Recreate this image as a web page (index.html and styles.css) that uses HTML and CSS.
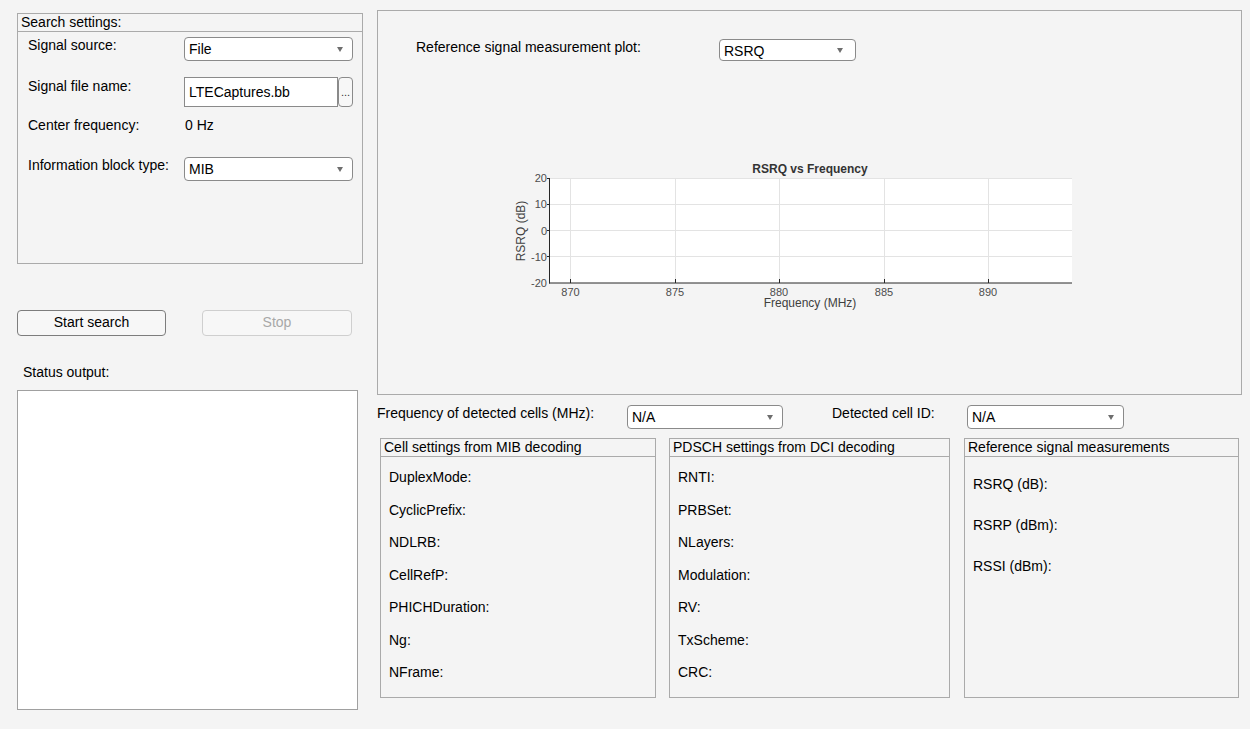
FILE: index.html
```html
<!DOCTYPE html>
<html lang="en">
<head>
    <meta charset="UTF-8">
    <title>LTE Cell Search</title>
    <link rel="stylesheet" href="styles.css">
</head>
<body>
    <div class="app">

        <!-- left column: search settings and status -->
        <div class="left-col">
            <div class="panel search-panel">
                <div class="panel-title">Search settings:</div>
                <div class="search-body">
                    <div class="field-row">
                        <div class="field-label">Signal source:</div>
                        <div class="dropdown w169"><span>File</span><i class="arrow"></i></div>
                    </div>
                    <div class="field-row row-file">
                        <div class="field-label pad1">Signal file name:</div>
                        <div class="file-input">LTECaptures.bb</div>
                        <div class="browse-btn">...</div>
                    </div>
                    <div class="field-row row-freq">
                        <div class="field-label">Center frequency:</div>
                        <div class="field-value">0 Hz</div>
                    </div>
                    <div class="field-row row-block">
                        <div class="field-label">Information block type:</div>
                        <div class="dropdown w169"><span>MIB</span><i class="arrow"></i></div>
                    </div>
                </div>
            </div>

            <div class="button-row">
                <div class="btn">Start search</div>
                <div class="btn btn-disabled">Stop</div>
            </div>

            <div class="status-label">Status output:</div>
            <div class="status-box"></div>
        </div>

        <!-- right column: plot and decoded info -->
        <div class="right-col">
            <div class="panel plot-panel">
                <div class="plot-header">
                    <div class="plot-label">Reference signal measurement plot:</div>
                    <div class="dropdown w137 arrow-far"><span>RSRQ</span><i class="arrow"></i></div>
                </div>
                <svg class="plot" width="863" height="333" viewBox="0 0 863 333">
                    <rect x="171" y="117" width="523" height="105" fill="#ffffff"/>
                    <g stroke="#e3e3e3" stroke-width="1">
                        <line x1="192.5" y1="117" x2="192.5" y2="222"/>
                        <line x1="297.5" y1="117" x2="297.5" y2="222"/>
                        <line x1="401.5" y1="117" x2="401.5" y2="222"/>
                        <line x1="506.5" y1="117" x2="506.5" y2="222"/>
                        <line x1="610.5" y1="117" x2="610.5" y2="222"/>
                        <line x1="171" y1="117.5" x2="694" y2="117.5"/>
                        <line x1="171" y1="143.5" x2="694" y2="143.5"/>
                        <line x1="171" y1="169.5" x2="694" y2="169.5"/>
                        <line x1="171" y1="195.5" x2="694" y2="195.5"/>
                    </g>
                    <g stroke="#262626" stroke-width="1">
                        <line x1="171.5" y1="117" x2="171.5" y2="222.5"/>
                        <line x1="171" y1="222" x2="694" y2="222"/>
                        <line x1="192.5" y1="222" x2="192.5" y2="218"/>
                        <line x1="297.5" y1="222" x2="297.5" y2="218"/>
                        <line x1="401.5" y1="222" x2="401.5" y2="218"/>
                        <line x1="506.5" y1="222" x2="506.5" y2="218"/>
                        <line x1="610.5" y1="222" x2="610.5" y2="218"/>
                        <line x1="169" y1="117.5" x2="171" y2="117.5"/>
                        <line x1="169" y1="143.5" x2="171" y2="143.5"/>
                        <line x1="169" y1="169.5" x2="171" y2="169.5"/>
                        <line x1="169" y1="195.5" x2="171" y2="195.5"/>
                    </g>
                    <text class="plot-title" x="432" y="112" text-anchor="middle">RSRQ vs Frequency</text>
                    <g class="tick-text" text-anchor="end">
                        <text x="169" y="121">20</text>
                        <text x="169" y="147">10</text>
                        <text x="169" y="174">0</text>
                        <text x="169" y="200">-10</text>
                        <text x="169" y="226">-20</text>
                    </g>
                    <g class="tick-text" text-anchor="middle">
                        <text x="192.5" y="235">870</text>
                        <text x="297" y="235">875</text>
                        <text x="401" y="235">880</text>
                        <text x="506" y="235">885</text>
                        <text x="610" y="235">890</text>
                    </g>
                    <text class="axis-label" x="432" y="246" text-anchor="middle">Frequency (MHz)</text>
                    <text class="axis-label" x="147" y="170" text-anchor="middle" transform="rotate(-90 147 170)">RSRQ (dB)</text>
                </svg>
            </div>

            <div class="detect-row">
                <div class="detect-label freq-label">Frequency of detected cells (MHz):</div>
                <div class="dropdown w156"><span>N/A</span><i class="arrow"></i></div>
                <div class="detect-label id-label">Detected cell ID:</div>
                <div class="dropdown w157"><span>N/A</span><i class="arrow"></i></div>
            </div>

            <div class="info-row">
                <div class="panel info-panel mib-panel">
                    <div class="panel-title">Cell settings from MIB decoding</div>
                    <div class="info-list">
                        <div>DuplexMode:</div>
                        <div>CyclicPrefix:</div>
                        <div>NDLRB:</div>
                        <div>CellRefP:</div>
                        <div>PHICHDuration:</div>
                        <div>Ng:</div>
                        <div>NFrame:</div>
                    </div>
                </div>
                <div class="panel info-panel dci-panel">
                    <div class="panel-title">PDSCH settings from DCI decoding</div>
                    <div class="info-list">
                        <div>RNTI:</div>
                        <div>PRBSet:</div>
                        <div>NLayers:</div>
                        <div>Modulation:</div>
                        <div>RV:</div>
                        <div>TxScheme:</div>
                        <div>CRC:</div>
                    </div>
                </div>
                <div class="panel info-panel meas-panel">
                    <div class="panel-title">Reference signal measurements</div>
                    <div class="info-list meas-list">
                        <div>RSRQ (dB):</div>
                        <div>RSRP (dBm):</div>
                        <div>RSSI (dBm):</div>
                    </div>
                </div>
            </div>
        </div>

    </div>
</body>
</html>
```

FILE: styles.css
```css
body {
    margin: 0;
    padding: 0;
    background-color: #f4f4f4;
    font-family: 'Liberation Sans', Arial, sans-serif;
    font-size: 14px;
    line-height: 16px;
    color: #000;
}

.app {
    display: flex;
    padding-left: 17px;
    height: 729px;
    box-sizing: border-box;
}

/* panels */
.panel {
    border: 1px solid #aaaaaa;
    box-sizing: border-box;
    background-color: #f4f4f4;
}

.panel-title {
    height: 17px;
    line-height: 17px;
    padding-left: 3px;
    border-bottom: 1px solid #aaaaaa;
    white-space: nowrap;
}

/* left column */
.left-col {
    width: 346px;
    flex-shrink: 0;
}

.search-panel {
    margin-top: 13px;
    height: 251px;
}

.search-body {
    padding: 5px 0 0 10px;
}

.field-row {
    display: flex;
    align-items: flex-start;
}

.row-file {
    margin-top: 16px;
}

.row-freq {
    margin-top: 10px;
}

.row-block {
    margin-top: 24px;
}

.field-label {
    width: 156px;
    flex-shrink: 0;
}

.field-label.pad1 {
    padding-top: 1px;
}

.field-value {
    padding-left: 1px;
}

.dropdown {
    position: relative;
    height: 24px;
    box-sizing: border-box;
    border: 1px solid #8a8a8a;
    border-radius: 4px;
    background-color: #fff;
    padding-left: 4px;
    line-height: 23px;
    flex-shrink: 0;
}

.dropdown .arrow {
    position: absolute;
    right: 9px;
    top: 9px;
    width: 0;
    height: 0;
    border-left: 3px solid transparent;
    border-right: 3px solid transparent;
    border-top: 5px solid #6e6e6e;
}

.dropdown.arrow-far .arrow {
    right: 12px;
    top: 8px;
}

.w169 { width: 169px; }
.w137 { width: 137px; height: 22px; line-height: 22px; }
.w156 { width: 156px; }
.w157 { width: 157px; }

.file-input {
    width: 154px;
    height: 30px;
    box-sizing: border-box;
    border: 1px solid #8a8a8a;
    background-color: #fff;
    padding-left: 4px;
    line-height: 29px;
}

.browse-btn {
    width: 15px;
    height: 30px;
    box-sizing: border-box;
    border: 1px solid #8a8a8a;
    border-radius: 4px;
    background-color: #f7f7f7;
    font-size: 11px;
    text-align: center;
    line-height: 28px;
    color: #333;
}

.button-row {
    display: flex;
    margin-top: 46px;
}

.btn {
    width: 149px;
    height: 26px;
    box-sizing: border-box;
    border: 1px solid #7d7d7d;
    border-radius: 4px;
    background-color: #f7f7f7;
    text-align: center;
    line-height: 23px;
}

.btn-disabled {
    width: 150px;
    margin-left: 36px;
    border-color: #cfcfcf;
    color: #a8a8a8;
}

.status-label {
    margin-top: 28px;
    padding-left: 6px;
}

.status-box {
    margin-top: 10px;
    width: 341px;
    height: 320px;
    box-sizing: border-box;
    border: 1px solid #a0a0a0;
    background-color: #fff;
}

/* right column */
.right-col {
    width: 865px;
    margin-left: 14px;
    flex-shrink: 0;
}

.plot-panel {
    margin-top: 10px;
    height: 385px;
}

.plot-header {
    display: flex;
    align-items: flex-start;
    padding: 28px 0 0 38px;
    height: 22px;
}

.plot-label {
    width: 303px;
    padding-top: 0;
}

.plot {
    display: block;
}

.plot-title {
    font-family: 'Liberation Sans', Arial, sans-serif;
    font-size: 12px;
    font-weight: bold;
    fill: #333;
}

.tick-text {
    font-family: 'Liberation Sans', Arial, sans-serif;
    font-size: 11px;
    fill: #4d4d4d;
}

.axis-label {
    font-family: 'Liberation Sans', Arial, sans-serif;
    font-size: 12px;
    fill: #404040;
}

.detect-row {
    display: flex;
    align-items: flex-start;
    margin-top: 10px;
}

.freq-label {
    width: 250px;
}

.id-label {
    width: 135px;
    margin-left: 49px;
}

.info-row {
    display: flex;
    margin-top: 9px;
    padding-left: 3px;
}

.info-panel {
    height: 260px;
}

.mib-panel { width: 276px; }
.dci-panel { width: 281px; margin-left: 13px; }
.meas-panel { width: 275px; margin-left: 14px; }

.info-list {
    display: flex;
    flex-direction: column;
    gap: 16.5px;
    padding: 12px 0 0 8px;
}

.info-list.meas-list {
    gap: 25px;
    padding-top: 19px;
}
```
